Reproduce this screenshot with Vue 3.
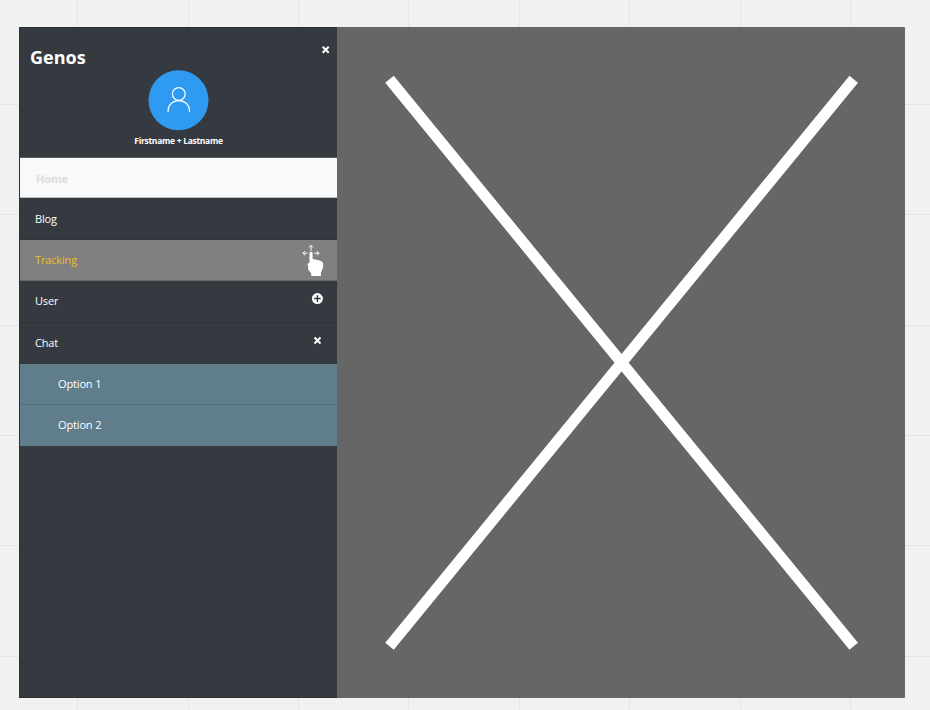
<script setup>
const columns = [77, 188, 298, 408, 519, 629, 740, 850]
const rows = [104, 214, 325, 435, 545, 656]
const items = [
  { label: 'Home', kind: 'home' },
  { label: 'Blog', kind: 'blog' },
  { label: 'Tracking', kind: 'tracking', icon: 'hand' },
  { label: 'User', kind: 'user', icon: 'plus' },
  { label: 'Chat', kind: 'chat', icon: 'close' },
  { label: 'Option 1', kind: 'option' },
  { label: 'Option 2', kind: 'option last' },
]
</script>

<template>
  <div class="canvas">
    <svg class="grid" width="930" height="710" shape-rendering="crispEdges">
      <rect v-for="x in columns" :key="'c' + x" :x="x" y="0" width="1" height="710" />
      <rect v-for="y in rows" :key="'r' + y" x="0" :y="y" width="930" height="1" />
    </svg>
    <div class="frame">
      <aside class="sidebar">
        <header class="head">
          <div class="top">
            <h1>Genos</h1>
            <svg class="close" width="9" height="9" viewBox="0 0 9 9">
              <path d="M1.7 1.7 7.7 7.7M7.7 1.7 1.7 7.7" />
            </svg>
          </div>
          <svg class="avatar" width="62" height="61" viewBox="0 0 62 61">
            <circle class="disc" cx="30.5" cy="30.3" r="30" />
            <circle cx="30.8" cy="24" r="6.4" />
            <path d="M20.1 42V40.8C20.1 34.8 24.8 30.5 30.8 30.5S41.5 34.8 41.5 40.8V42" />
          </svg>
          <div class="name">Firstname + Lastname</div>
        </header>
        <nav>
          <div v-for="item in items" :key="item.label" class="item" :class="item.kind">
            <span>{{ item.label }}</span>
            <svg v-if="item.icon === 'hand'" class="hand" width="22" height="34" viewBox="-0.5 0.3 22 34">
              <path class="arrow" d="M9.5 7V2M7.5 3.7 9.5 1.7 11.5 3.7M6 9.5H1.5M3.5 7.5 1.5 9.5 3.5 11.5M13 9.5H17.5M15.5 7.5 17.5 9.5 15.5 11.5" />
              <path class="palm" d="M8 9.3Q8 8 9.5 8T11.1 9.3V15.2L14 15.7 18 16.8Q21.5 17.8 21.6 19.5V23.5L19.4 29V32.2H9.7V29.6L6.7 26V22L5.8 20.3 8 19.1Z" />
            </svg>
            <svg v-else-if="item.icon === 'plus'" class="plus" width="12" height="12" viewBox="0 0 12 12">
              <circle cx="6.4" cy="5.6" r="5.5" />
              <path d="M6.4 2.3V8.9M3.1 5.6H9.7" />
            </svg>
            <svg v-else-if="item.icon === 'close'" class="close" width="9" height="9" viewBox="0 0 9 9">
              <path d="M1.5 1.5 7.5 7.5M7.5 1.5 1.5 7.5" />
            </svg>
          </div>
        </nav>
      </aside>
      <main class="content">
        <svg width="568" height="671" viewBox="337 27 568 671">
          <path d="M389.5 79.2 853.7 646.2M853.7 79.2 389.5 646.2" />
        </svg>
      </main>
    </div>
  </div>
</template>

<style>
body {
  margin: 0;
  background: #f1f1f1;
}
</style>

<style scoped>
.canvas {
  position: relative;
  box-sizing: border-box;
  width: 930px;
  height: 710px;
  padding: 27px 25px 12px 19px;
  overflow: hidden;
  background: #f1f1f1;
  font-family: "Open Sans", "Noto Sans", sans-serif;
}
.grid {
  position: absolute;
  inset: 0;
}
.grid rect {
  fill: #e5e5e5;
}
svg {
  display: block;
}
.hand {
  overflow: visible;
}
.frame {
  position: relative;
  display: flex;
  width: 886px;
  height: 671px;
  overflow: hidden;
  border-radius: 1px;
  background: #666;
}
.sidebar {
  box-sizing: border-box;
  width: 318px;
  height: 671px;
  border: 1px solid #2d3135;
  border-right: 0;
  background: #353a41;
  color: #fff;
}
.head {
  height: 129px;
  display: flex;
  flex-direction: column;
  align-items: center;
}
.top {
  display: flex;
  align-items: flex-start;
  justify-content: space-between;
  box-sizing: border-box;
  width: 100%;
  height: 42px;
  padding: 17px 7px 0 10px;
}
h1 {
  margin: 0;
  font-size: 18px;
  line-height: 25px;
  font-weight: 700;
}
.close path {
  fill: none;
  stroke: #fff;
  stroke-width: 2;
}
.avatar circle,
.avatar path {
  fill: none;
  stroke: #fff;
  stroke-width: 1.25;
}
.avatar .disc {
  fill: #2e9af1;
  stroke: none;
}
.name {
  margin-top: 3px;
  font-size: 8.5px;
  letter-spacing: -0.3px;
  line-height: 14px;
  font-weight: 700;
}
.item {
  box-sizing: border-box;
  display: flex;
  justify-content: space-between;
  height: 41px;
  padding: 0 14px 0 15px;
  border-bottom: 1px solid #2f3439;
  font-size: 11px;
  letter-spacing: -0.15px;
  line-height: 39px;
}
.home {
  padding-left: 16px;
  border-top: 1px solid #5c5f62;
  border-bottom-color: #b8bfbe;
  background: #f8f9fb;
  color: #dcdcdc;
  font-weight: 700;
  line-height: 41px;
}
.blog {
  height: 42px;
  line-height: 41px;
}
.tracking {
  padding-right: 14px;
  border-bottom-color: #6a6b67;
  background: #808080;
  color: #eac11c;
}
.arrow {
  fill: none;
  stroke: #fff;
  stroke-width: 1;
}
.palm {
  fill: #fff;
}
.hand {
  margin-top: 4px;
}
.user {
  height: 42px;
}
.plus {
  margin-top: 12px;
}
.plus circle {
  fill: #fff;
}
.plus path {
  stroke: #353a41;
  stroke-width: 1.5;
}
.chat .close {
  margin: 13px 1px 0 0;
}
.option {
  padding-left: 38px;
  border-color: #506e75;
  background: #607d8b;
}
.last {
  border-bottom-color: #607d8b;
}
.content path {
  stroke: #fff;
  stroke-width: 11;
}
</style>
